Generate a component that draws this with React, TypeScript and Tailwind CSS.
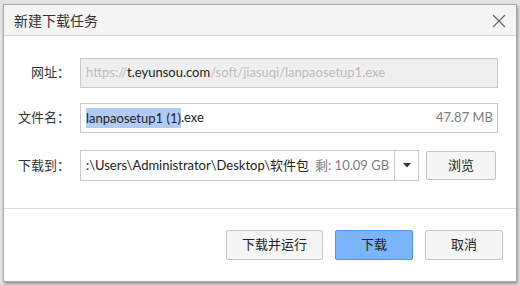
import React from "react";

const font = { fontFamily: 'Lato, "Noto Sans CJK SC", sans-serif' };

function Label({ children }: { children: React.ReactNode }) {
  return (
    <div className="w-[66px] shrink-0 text-right text-[13px] text-[#333]">
      {children}
    </div>
  );
}

function Btn({ children, primary, w }: { children: React.ReactNode; primary?: boolean; w: string }) {
  return (
    <button
      className={
        primary
          ? `${w} h-[30px] rounded-[2px] border border-[#4b98f2] bg-[#7ab5fb] text-[13px] text-[#222]`
          : `${w} h-[30px] rounded-[2px] border border-[#c6c6c6] bg-[#f5f5f5] text-[13px] text-[#222]`
      }
    >
      {children}
    </button>
  );
}

export default function App() {
  return (
    <div className="w-[520px] h-[285px] bg-[#e3e3e3] pt-[4px] pl-[3px]" style={font}>
      <div className="w-[514px] h-[278px] border border-[#a9a9a9] bg-white shadow-[1px_2px_3px_rgba(0,0,0,0.35)] flex flex-col">
        {/* title bar */}
        <div className="h-[31px] shrink-0 bg-[#f4f4f4] border-b border-[#d6d6d6] flex items-center justify-between pl-[10px] pr-[10px]">
          <span className="text-[14px] text-[#333]">新建下载任务</span>
          <svg width="14" height="14" viewBox="0 0 14 14" className="mt-[1px]">
            <path d="M1 1L13 13M13 1L1 13" stroke="#666" strokeWidth="1.2" />
          </svg>
        </div>

        {/* form */}
        <div className="h-[173px] shrink-0 border-b border-[#dcdcdc] pt-[22px] pr-[18px] flex flex-col">
          <div className="flex items-center gap-[10px]">
            <Label>网址：</Label>
            <div className="flex-1 h-[30px] border border-[#c9c9c9] bg-[#efefef] flex items-center px-[5px] text-[13px] whitespace-nowrap overflow-hidden">
              <span className="text-[#bcbcbc]">https://</span>
              <span className="text-[#222]">t.eyunsou.com</span>
              <span className="text-[#bcbcbc]">/soft/jiasuqi/lanpaosetup1.exe</span>
            </div>
          </div>

          <div className="flex items-center gap-[10px] mt-[15px]">
            <Label>文件名：</Label>
            <div className="flex-1 h-[30px] border border-[#c9c9c9] bg-white flex items-center pl-[5px] pr-[4px] text-[13px] whitespace-nowrap">
              <span className="bg-[#b1cbf5] text-[#222] leading-[20px]">lanpaosetup1 (1)</span>
              <span className="text-[#222]">.exe</span>
              <span className="ml-auto text-[#7d7d7d]">47.87 MB</span>
            </div>
          </div>

          <div className="flex items-center mt-[17px]">
            <Label>下载到：</Label>
            <div className="ml-[10px] w-[339px] h-[31px] border border-[#c9c9c9] bg-white flex items-stretch text-[13px] whitespace-nowrap">
              <div className="flex-1 flex items-center pl-[5px] overflow-hidden">
                <span className="text-[#222]">:\Users\Administrator\Desktop\软件包</span>
                <span className="ml-[6px] text-[#7d7d7d]">剩: 10.09 GB</span>
              </div>
              <div className="w-[24px] border-l border-[#c9c9c9] flex items-center justify-center">
                <svg width="8" height="5" viewBox="0 0 8 5">
                  <path d="M0 0H8L4 4.5Z" fill="#333" />
                </svg>
              </div>
            </div>
            <button className="ml-[7px] w-[70px] h-[29px] rounded-[2px] border border-[#c6c6c6] bg-[#f5f5f5] text-[13px] text-[#222]">
              浏览
            </button>
          </div>
        </div>

        {/* footer */}
        <div className="flex-1 flex items-center justify-end gap-[12px] pr-[13px] pb-[1px]">
          <Btn w="w-[97px]">下载并运行</Btn>
          <Btn w="w-[78px]" primary>
            下载
          </Btn>
          <Btn w="w-[78px]">取消</Btn>
        </div>
      </div>
    </div>
  );
}
